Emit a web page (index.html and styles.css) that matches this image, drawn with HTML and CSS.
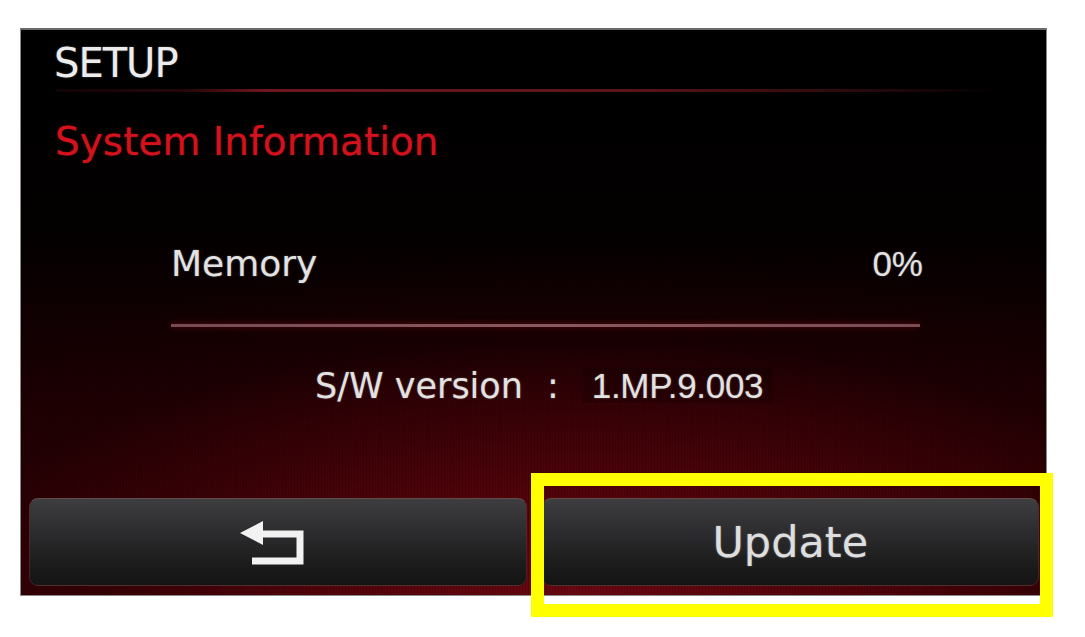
FILE: index.html
```html
<!DOCTYPE html>
<html lang="en">
<head>
    <meta charset="UTF-8">
    <meta name="viewport" content="width=device-width, initial-scale=1.0">
    <title>SETUP - System Information</title>
    <link rel="stylesheet" href="styles.css">
</head>
<body>
    <div class="screen">
        <!-- Header -->
        <div class="title">SETUP</div>
        <div class="title-rule"></div>
        <div class="subtitle">System Information</div>

        <!-- Memory usage -->
        <div class="info-row">
            <span class="info-label">Memory</span>
            <span class="info-value">0%</span>
        </div>
        <div class="info-rule"></div>

        <!-- Software version -->
        <div class="version-row">
            <span class="version-label">S/W version</span>
            <span class="version-colon">:</span>
            <span class="version-value">1.MP.9.003</span>
        </div>

        <!-- Bottom buttons -->
        <div class="button-bar">
            <button class="soft-button">
                <svg class="back-icon" width="64" height="44" viewBox="0 0 64 44">
                    <polygon points="0,12 23,0 23,24" fill="#f2f2f2"/>
                    <path d="M19 13 H60 V40 H12" fill="none" stroke="#f2f2f2" stroke-width="7"/>
                </svg>
            </button>
            <button class="soft-button">Update</button>
        </div>
    </div>

    <!-- highlight frame around the Update button -->
    <div class="highlight"></div>
</body>
</html>
```

FILE: styles.css
```css
body {
    margin: 0;
    background-color: #fff;
    position: relative;
    min-height: 637px;
    font-family: "DejaVu Sans", sans-serif;
}
.screen {
    box-sizing: border-box;
    width: 1027px;
    margin: 28px 0 0 20px;
    padding: 13px 7px 9px 8px;
    border: 1px solid #8a8a8a;
    border-top: 2px solid #6a6a6a;
    background:
        repeating-linear-gradient(90deg, rgba(0,0,0,0.14) 0 1px, transparent 1px 3px),
        radial-gradient(ellipse 85% 60% at 55% 100%, #6a0810 0%, #52030a 30%, #360106 55%, rgba(30,0,3,0.5) 75%, transparent 100%),
        linear-gradient(to bottom, #000 0%, #030000 35%, #160002 58%, #2c0004 80%, #360005 100%);
    color: #e2e2e2;
    text-shadow: 0 0 2px rgba(255,255,255,0.35);
}
.title {
    font-size: 40px;
    line-height: 40px;
    padding-left: 25px;
    color: #ececec;
    letter-spacing: -1px;
}
.title-rule {
    height: 3px;
    margin: 6px 40px 0 27px;
    background: linear-gradient(to right, rgba(110,20,26,0.15) 0%, rgba(110,20,26,0.35) 14%, #6e171d 22%, #5c1519 60%, rgba(70,16,20,0.6) 85%, transparent 100%);
}
.subtitle {
    margin-top: 30px;
    padding-left: 26px;
    font-size: 39px;
    line-height: 39px;
    color: #d4121d;
    text-shadow: 0 0 2px rgba(220,20,30,0.5);
}
.info-row {
    display: flex;
    justify-content: space-between;
    align-items: baseline;
    margin: 85px 116px 0 142px;
    height: 36px;
}
.info-label {
    font-size: 36px;
    line-height: 36px;
}
.info-value {
    font-family: "Liberation Sans", Arial, sans-serif;
    font-size: 35px;
    line-height: 35px;
}
.info-rule {
    height: 3px;
    margin: 42px 119px 0 142px;
    background: linear-gradient(to right, #7a4a52, #8a5860 50%, #7c4c54);
    box-shadow: 0 0 6px rgba(150,20,30,0.6);
}
.version-row {
    display: flex;
    align-items: baseline;
    margin-top: 41px;
    padding-left: 286px;
    height: 35px;
}
.version-label {
    font-size: 35px;
    line-height: 35px;
}
.version-colon {
    font-size: 35px;
    line-height: 35px;
    margin-left: 24px;
}
.version-value {
    font-family: "Liberation Sans", Arial, sans-serif;
    font-size: 35px;
    line-height: 35px;
    margin-left: 23px;
    padding: 0 10px;
    background: rgba(0,0,0,0.18);
    letter-spacing: -0.3px;
}
.button-bar {
    display: flex;
    gap: 15px;
    margin-top: 95px;
}
.soft-button {
    flex: 1;
    height: 88px;
    display: flex;
    align-items: center;
    justify-content: center;
    border: 1px solid rgba(90,40,40,0.7);
    border-top-color: rgba(120,90,90,0.8);
    border-radius: 9px;
    background: linear-gradient(to bottom, #3e3d40 0%, #2e2e30 35%, #1c1c1d 75%, #141415 100%);
    color: #dedede;
    font-family: "DejaVu Sans", sans-serif;
    font-size: 43px;
    text-shadow: 0 0 2px rgba(255,255,255,0.35);
    padding: 0;
    cursor: pointer;
}
.back-icon {
    margin-right: 12px;
    margin-top: 2px;
}
.highlight {
    position: absolute;
    left: 531px;
    top: 473px;
    width: 522px;
    height: 144px;
    box-sizing: border-box;
    border: 13px solid #ffff00;
}
```
